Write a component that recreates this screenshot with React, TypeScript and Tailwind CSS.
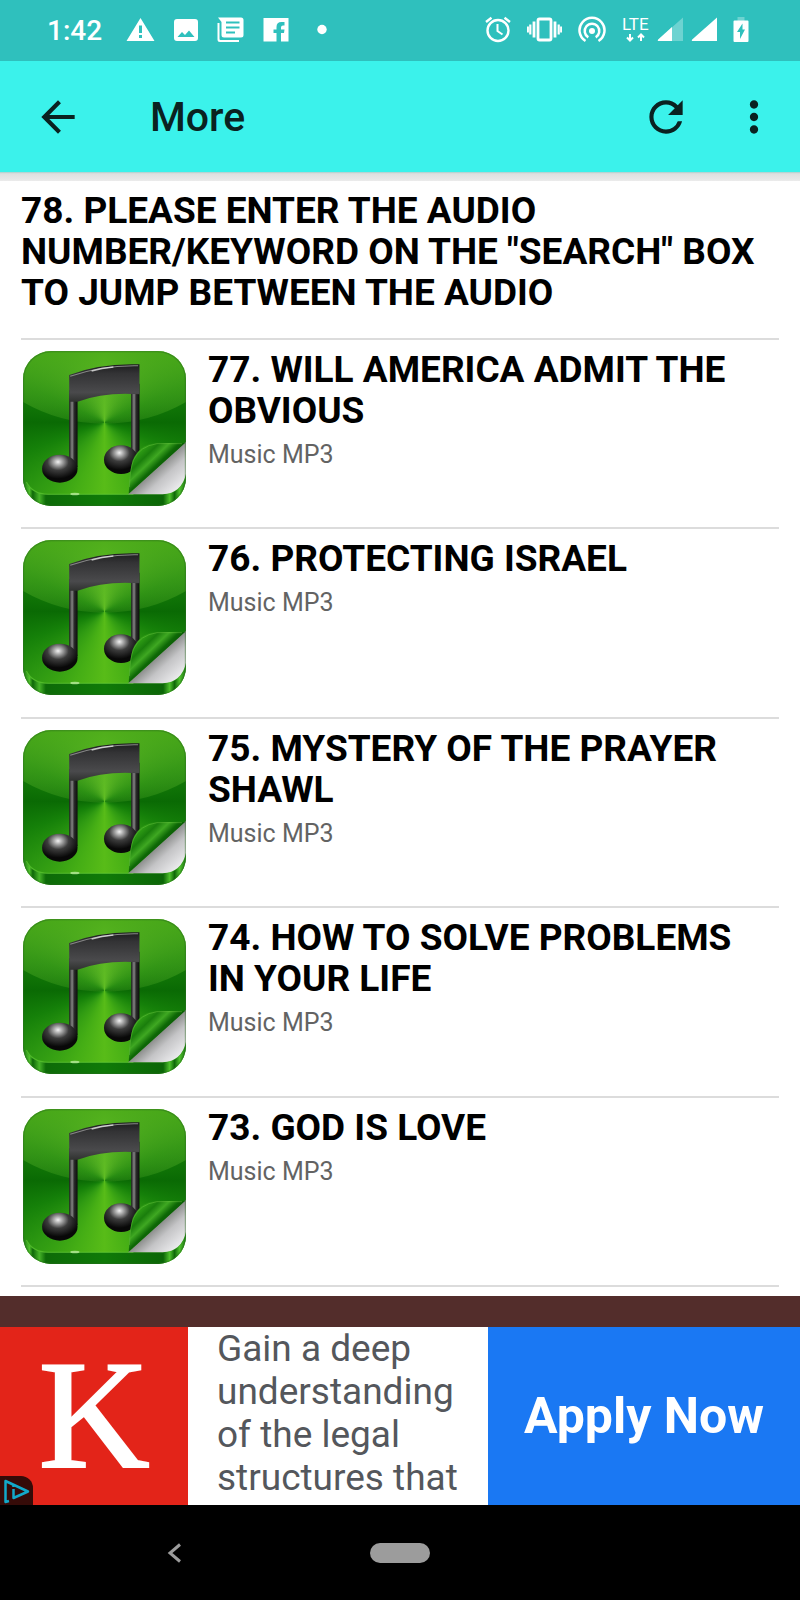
import { useId } from 'react';
import { MdArrowBack, MdMoreVert, MdRefresh } from 'react-icons/md';

const tracks = [
  { id: 77, title: 'WILL AMERICA ADMIT THE OBVIOUS' },
  { id: 76, title: 'PROTECTING ISRAEL' },
  { id: 75, title: 'MYSTERY OF THE PRAYER SHAWL' },
  { id: 74, title: 'HOW TO SOLVE PROBLEMS IN YOUR LIFE' },
  { id: 73, title: 'GOD IS LOVE' },
];

const StatusBar = () => (
  <div className="flex h-[61px] items-start justify-between bg-[#2fc0bd] pt-4 pr-[51px] pl-[47px] text-white">
    <div className="flex items-start gap-[19px]">
      <span className="w-[60px] text-[28px] leading-[30px] font-medium">1:42</span>
      {/* warning */}
      <svg width="29" height="28" viewBox="0 0 29 28" fill="currentColor">
        <path fillRule="evenodd" d="M14.5 2 L28.5 25 H0.5 Z M13 9.5 V17 H16 V9.5 Z M13 19 V22 H16 V19 Z" />
      </svg>
      {/* picture */}
      <svg width="24" height="28" viewBox="0 0 24 28" fill="currentColor">
        <path fillRule="evenodd" d="M3 3 H21 Q24 3 24 6 V22 Q24 25 21 25 H3 Q0 25 0 22 V6 Q0 3 3 3 Z M3.5 21 H20.5 L15 14.5 L11 19 L8 16 Z" />
      </svg>
      {/* news */}
      <svg width="27" height="28" viewBox="0 0 27 28" fill="currentColor">
        <path fillRule="evenodd" d="M1 1.5 H24 Q26.5 1.5 26.5 4 V19 Q26.5 21.5 24 21.5 H7 Q4.5 21.5 4.5 19 V6 Z M9 5.5 V7.5 H22.5 V5.5 Z M9 10.5 V12.5 H22.5 V10.5 Z M9 15.5 V17.5 H18 V15.5 Z" />
        <path d="M0.5 7 H2.5 V23 Q2.5 24 3.5 24 H22 V26 H3 Q0.5 26 0.5 23.5 Z" />
      </svg>
      {/* facebook */}
      <svg width="26" height="28" viewBox="0 0 26 28" fill="currentColor">
        <path d="M0.5 2 H25.5 V25.5 H18 V17 H21 L21.5 13.5 H18 V11.5 Q18 9.5 20 9.5 H21.5 V6 H18.5 Q13.5 6 13.5 11 V13.5 H10.5 V17 H13.5 V25.5 H0.5 Z" />
      </svg>
      <svg className="ml-[9px]" width="10" height="28" viewBox="0 0 10 28" fill="currentColor">
        <circle cx="5" cy="13.5" r="4.7" />
      </svg>
    </div>

    <div className="flex items-start gap-4">
      {/* alarm */}
      <svg width="26" height="28" viewBox="0 0 26 28" fill="none" stroke="currentColor" strokeWidth="2.4">
        <circle cx="13" cy="14.5" r="10.5" />
        <path d="M12.5 8 V15 L17.5 18.5" strokeWidth="2" />
        <path d="M1 6 L6.5 1.8 M25 6 L19.5 1.8" />
      </svg>
      {/* vibrate */}
      <svg width="35" height="28" viewBox="0 0 35 28" fill="none" stroke="currentColor" strokeWidth="2.8">
        <rect x="11" y="3" width="13" height="21" rx="1.5" />
        <path d="M7 5.5 V21.5 M28 5.5 V21.5" />
        <path d="M3.3 8.5 V18.5 M31.7 8.5 V18.5 M0.8 10.5 V16.5 M34.2 10.5 V16.5" strokeWidth="2.2" />
      </svg>
      {/* hotspot */}
      <svg width="28" height="28" viewBox="0 0 28 28" fill="none" stroke="currentColor" strokeWidth="2.5">
        <circle cx="14" cy="15" r="3" fill="currentColor" stroke="none" />
        <path d="M7.5 25 A12.5 12.5 0 1 1 20.5 25" />
        <path d="M10.3 21.3 A7.3 7.3 0 1 1 17.7 21.3" />
      </svg>
      <div className="flex items-start gap-2">
        {/* mobile data */}
        <svg className="-mt-2" width="27" height="36" viewBox="0 -8 27 36" fill="none" stroke="currentColor" strokeWidth="2">
          <text x="0" y="14" fontSize="17" fill="currentColor" stroke="none">LTE</text>
          <path d="M8 18 V24 M5 21.5 L8 24.5 L11 21.5 M19 25 V19 M16 21.5 L19 18.5 L22 21.5" />
        </svg>
        <svg width="26" height="28" viewBox="0 0 26 28" fill="currentColor">
          <path d="M26 1.5 V25 H2 Q0 25 1.2 23.5 Z" opacity="0.3" />
          <path d="M15 11 V25 H2 Q0 25 1.2 23.5 Z" />
        </svg>
        <svg width="26" height="28" viewBox="0 0 26 28" fill="currentColor">
          <path d="M26 1.5 V25 H2 Q0 25 1.2 23.5 Z" />
        </svg>
      </div>
      {/* battery */}
      <svg width="16" height="28" viewBox="0 0 16 28" fill="currentColor">
        <rect x="4.5" y="1" width="7" height="4" opacity="0.3" />
        <path fillRule="evenodd" d="M1.5 4.5 H14.5 Q15.5 4.5 15.5 5.5 V25 Q15.5 26 14.5 26 H1.5 Q0.5 26 0.5 25 V5.5 Q0.5 4.5 1.5 4.5 Z M9.5 7.5 L4 16 H7 V23 L12 13.5 H9.5 Z" />
      </svg>
    </div>
  </div>
);

const AppBar = () => (
  <header className="relative flex h-[111px] items-center bg-[#3bf2eb] pr-[21px] pl-[33px] text-[#0a2221] shadow-[0_1px_1px_#b8d4d2]">
    <button aria-label="Back">
      <MdArrowBack className="size-[50px]" />
    </button>
    <h1 className="ml-[67px] grow text-[41px] leading-[48px] font-medium">More</h1>
    <button aria-label="Refresh" className="mr-[38px]">
      <MdRefresh className="size-[50px]" />
    </button>
    <button aria-label="More options">
      <MdMoreVert className="size-[50px]" />
    </button>
  </header>
);

const MusicIcon = () => {
  const id = useId();
  const ref = (name: string) => `url(#${id}${name})`;

  return (
    <div className="mt-[2px] h-[155px] w-[163px] shrink-0 overflow-hidden rounded-[28px] bg-[conic-gradient(at_50%_46%,#62c020_0deg,#48a81a_25deg,#178009_65deg,#0a6a04_90deg,#158009_110deg,#2f9a12_135deg,#45ae15_158deg,#58bc18_180deg,#45ae15_202deg,#2f9a12_225deg,#158009_250deg,#0a6a04_270deg,#178009_295deg,#48a81a_335deg,#62c020_360deg)]">
      <svg className="size-full" viewBox="70 62 487 465" preserveAspectRatio="none">
        <defs>
          <linearGradient id={`${id}gloss`} x1="0" y1="0" x2="0" y2="1">
            <stop offset="0" stopColor="#4cab1a" stopOpacity="0.85" />
            <stop offset="1" stopColor="#5cb42e" stopOpacity="0.22" />
          </linearGradient>
          <linearGradient id={`${id}edge`} x1="0" y1="0" x2="1" y2="0">
            <stop offset="0" stopColor="#1c7a10" />
            <stop offset="0.04" stopColor="#4ec02c" />
            <stop offset="0.06" stopColor="#0e6808" />
            <stop offset="0.1" stopColor="#46b428" />
            <stop offset="0.14" stopColor="#0d6a08" />
            <stop offset="0.5" stopColor="#0f7a08" />
            <stop offset="0.86" stopColor="#0b6607" />
            <stop offset="0.9" stopColor="#4ec02c" />
            <stop offset="0.93" stopColor="#0e6808" />
            <stop offset="0.96" stopColor="#4ec02c" />
            <stop offset="1" stopColor="#1c7a10" />
          </linearGradient>
          <linearGradient id={`${id}beam`} x1="0" y1="0" x2="0" y2="1">
            <stop offset="0" stopColor="#1c1c1e" />
            <stop offset="0.25" stopColor="#333335" />
            <stop offset="0.75" stopColor="#4a4a4c" />
            <stop offset="1" stopColor="#303230" />
          </linearGradient>
          <linearGradient id={`${id}stem`} x1="0" y1="0" x2="1" y2="0">
            <stop offset="0" stopColor="#1c1c1c" />
            <stop offset="0.35" stopColor="#858585" />
            <stop offset="0.6" stopColor="#2b2b2b" />
            <stop offset="1" stopColor="#0c0c0c" />
          </linearGradient>
          <radialGradient id={`${id}ball`} cx="0.45" cy="0.26" r="0.6">
            <stop offset="0" stopColor="#f2f2f2" />
            <stop offset="0.2" stopColor="#a8a8a8" />
            <stop offset="0.5" stopColor="#3c3c3c" />
            <stop offset="1" stopColor="#080808" />
          </radialGradient>
          <linearGradient id={`${id}fold`} gradientUnits="userSpaceOnUse" x1="398" y1="350" x2="470" y2="425">
            <stop offset="0" stopColor="#4fb628" />
            <stop offset="0.25" stopColor="#2d9a14" />
            <stop offset="0.45" stopColor="#1a7e0c" />
            <stop offset="0.65" stopColor="#3fa822" />
            <stop offset="0.85" stopColor="#0e6806" />
            <stop offset="1" stopColor="#0a5a05" />
          </linearGradient>
          <linearGradient id={`${id}paper`} gradientUnits="userSpaceOnUse" x1="468" y1="412" x2="530" y2="480">
            <stop offset="0" stopColor="#888a88" />
            <stop offset="0.4" stopColor="#c4c4c6" />
            <stop offset="1" stopColor="#ececee" />
          </linearGradient>
        </defs>

        <path d="M70 62 H557 V215 Q445 280 313 280 Q182 280 70 215 Z" fill={ref('gloss')} />
        <path d="M70 440 Q88 490 140 492 H487 Q540 490 557 440 V527 H70 Z" fill={ref('edge')} />
        <path d="M80 455 Q98 491 145 492 H400" fill="none" stroke="#6fd840" strokeWidth="4" opacity="0.5" />
        <ellipse cx="225" cy="491" rx="14" ry="4" fill="#dfffc8" opacity="0.6" />

        {/* notes */}
        <path d="M208 180 H233 V410 H208 Z" fill={ref('stem')} />
        <path d="M393 160 H418 V385 H393 Z" fill={ref('stem')} />
        <path d="M208 134 Q300 98 418 102 V192 Q315 184 233 214 L208 214 Z" fill={ref('beam')} />
        <path d="M211 138 Q305 104 414 106" fill="none" stroke="#888" strokeWidth="3" />
        <path d="M275 122 Q305 113 340 110" fill="none" stroke="#f4f4f4" strokeWidth="4" opacity="0.7" />
        <ellipse cx="180" cy="415" rx="53" ry="42" fill={ref('ball')} />
        <ellipse cx="363" cy="388" rx="51" ry="43" fill={ref('ball')} />

        {/* peeled corner */}
        <path d="M384 492 L557 334 V430 Q545 488 487 492 Z" fill={ref('paper')} />
        <path d="M386 490 Q388 420 398 390 Q416 344 470 338 H554 Z" fill={ref('fold')} />
        <path d="M388 470 Q390 415 400 390 Q418 348 470 340 H545" fill="none" stroke="#68c440" strokeWidth="2" opacity="0.7" />

        <rect x="72" y="64" width="483" height="461" rx="83" fill="none" stroke="#2c6b22" strokeWidth="3" opacity="0.5" />
      </svg>
    </div>
  );
};

const AdBanner = () => (
  <aside className="bg-[#532d2b] pt-[31px]">
    <div className="flex h-[178px] overflow-hidden bg-white">
      <div className="relative flex w-[188px] shrink-0 justify-center bg-[#e32419]">
        <span className="font-['Liberation_Serif',serif] text-[154px] leading-[176px] text-white [-webkit-text-stroke:2px_white]">
          K
        </span>
        <a
          href="#adchoices"
          aria-label="AdChoices"
          className="absolute bottom-0 left-0 h-[29px] w-[33px] rounded-tr-[12px] bg-[#350b08]"
        >
          <svg width="33" height="29" viewBox="0 0 33 29" fill="none" stroke="#12a9c9" strokeWidth="2.5" strokeLinejoin="round">
            <path d="M9 25 L5.5 26 V5 L28 15.5 L13.5 22 V13" />
            <path d="M13.5 8.5 V11" />
          </svg>
        </a>
      </div>
      <p className="grow basis-0 pl-[29px] text-[37px] leading-[43px] text-[#54575c]">
        Gain a deep understanding of the legal structures that
      </p>
      <button className="w-[312px] shrink-0 bg-[#1a78f3] text-[50px] leading-[58px] font-bold text-white">Apply Now</button>
    </div>
  </aside>
);

const NavigationBar = () => (
  <nav className="grid h-[95px] grid-cols-[1fr_60px_1fr] items-center bg-black">
    <button aria-label="Back" className="ml-[167px] justify-self-start">
      <svg width="15" height="20" viewBox="0 0 15 20" fill="none" stroke="#9c9c9c" strokeWidth="3">
        <path d="M13 1.5 L3 10 L13 18.5" />
      </svg>
    </button>
    <button aria-label="Home" className="h-5 rounded-full bg-[#9c9c9c]" />
  </nav>
);

export default function App() {
  return (
    <div className="flex min-h-screen flex-col bg-white font-[Roboto,sans-serif]">
      <StatusBar />
      <AppBar />
      <div className="h-[9px] bg-linear-to-b from-[#dcdcdc] to-[#ebebeb]" />

      <main className="flex grow flex-col px-[21px] pb-[9px]">
        <h2 className="border-b-2 border-[#dcdcdc] pt-[9px] pb-[25px] text-[37px] leading-[41px] font-bold text-black">
          78. PLEASE ENTER THE AUDIO NUMBER/KEYWORD ON THE "SEARCH" BOX TO JUMP BETWEEN THE AUDIO
        </h2>
        <ul className="flex grow flex-col">
          {tracks.map((track) => (
            <li key={track.id} className="flex grow basis-0 gap-[22px] border-b-2 border-[#dcdcdc] pt-[9px] pr-4 pl-[2px]">
              <MusicIcon />
              <div className="grow basis-0">
                <h3 className="text-[37px] leading-[41px] font-bold text-black">{`${track.id}. ${track.title}`}</h3>
                <p className="mt-[9px] text-[25px] leading-[29px] text-[#636363]">Music MP3</p>
              </div>
            </li>
          ))}
        </ul>
      </main>

      <AdBanner />
      <NavigationBar />
    </div>
  );
}
